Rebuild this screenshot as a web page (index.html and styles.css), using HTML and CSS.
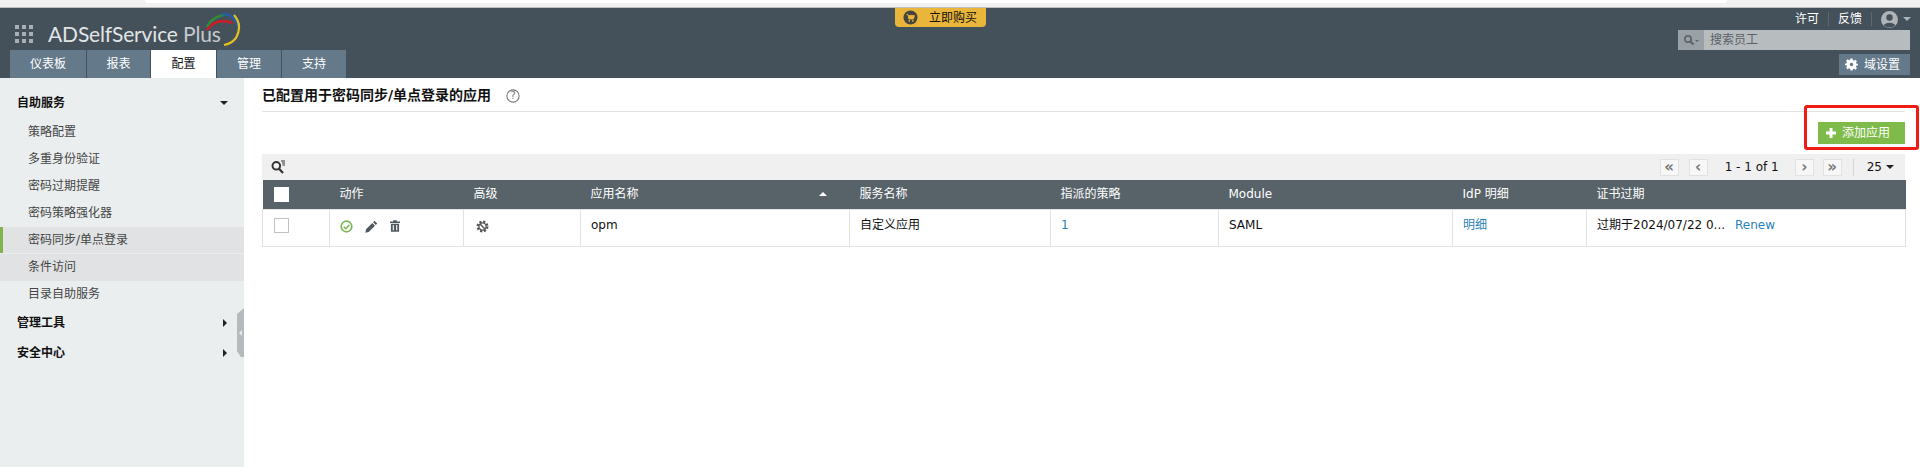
FILE: index.html
```html
<!DOCTYPE html>
<html lang="zh">
<head>
<meta charset="utf-8">
<title>ADSelfService Plus</title>
<link rel="stylesheet" href="styles.css">
</head>
<body>
<div class="chrome"><div class="chrome-field"></div></div>
<header class="header">
  <div class="header-left">
    <div class="brand">
      <svg class="grid-icon" width="19" height="19" viewBox="0 0 19 19" fill="#a9b0b5"><rect x="0" y="0" width="4" height="4"/><rect x="7" y="0" width="4" height="4"/><rect x="14" y="0" width="4" height="4"/><rect x="0" y="7" width="4" height="4"/><rect x="7" y="7" width="4" height="4"/><rect x="14" y="7" width="4" height="4"/><rect x="0" y="14" width="4" height="4"/><rect x="7" y="14" width="4" height="4"/><rect x="14" y="14" width="4" height="4"/></svg>
      <span class="brand-name">ADSelfService <span class="brand-plus">Plus</span></span>
      <svg class="brand-arc" width="44" height="38" viewBox="0 0 44 38" fill="none"><path d="M7 17Q12 6 28 4" stroke="#2e8a3e" stroke-width="2.4"/><path d="M22 4Q34 3 38 17" stroke="#2a5aa5" stroke-width="2.6"/><path d="M7 20Q16 7 33 13" stroke="#c4202a" stroke-width="2.6"/><path d="M34 5Q43 15 36 28Q31 34 24 35" stroke="#e4c21e" stroke-width="2.200"/></svg>
    </div>
    <nav class="tabs">
      <a class="tab t1">仪表板</a><a class="tab t2">报表</a><a class="tab active t3">配置</a><a class="tab t4">管理</a><a class="tab t5">支持</a>
    </nav>
  </div>
  <div class="header-right">
    <div class="top-links">
      <span>许可</span><i class="sep"></i><span>反馈</span><i class="sep"></i>
      <svg width="17" height="17" viewBox="0 0 17 17"><circle cx="8.5" cy="8.5" r="8.5" fill="#aeb4b8"/><circle cx="8.5" cy="6.5" r="3.2" fill="#44505a"/><path d="M2.8 14.2C4 10.8 13 10.8 14.2 14.2A8 8 0 0 1 2.8 14.2Z" fill="#44505a"/></svg>
      <i class="caret-down light"></i>
    </div>
    <div class="search">
      <span class="search-icon"><svg width="16" height="12" viewBox="0 0 16 12" fill="none" stroke="#5d666c"><circle cx="5" cy="5" r="3.2" stroke-width="1.8"/><path d="M7.5 7.5L10.5 10.5" stroke-width="2.2"/><path d="M12 6h4l-2 2z" fill="#5d666c" stroke="none"/></svg></span>
      <span class="search-text">搜索员工</span>
    </div>
    <a class="domain-btn">
      <svg width="13" height="13" viewBox="-1 -1 26 26" fill="#fff"><path d="M10 0h4l.8 3.4 2.2.9 3-1.8 2.8 2.8-1.8 3 .9 2.2L25 10.300v3.400l-3.100.8-.9 2.200 1.800 3-2.800 2.800-3-1.800-2.200.9L14 24h-4l-.8-3.400-2.200-.9-3 1.800-2.800-2.800 1.800-3-.9-2.200L-1 13.700v-3.400l3.100-.8.9-2.200-1.800-3 2.800-2.800 3 1.800 2.200-.9zM12 8.500a3.500 3.500 0 1 0 0 7 3.500 3.500 0 0 0 0-7z" fill-rule="evenodd"/></svg>
      <span>域设置</span>
    </a>
  </div>
  <a class="buy"><svg width="15" height="15" viewBox="0 0 15 15"><circle cx="7.500" cy="7.500" r="7" fill="#46443c"/><path d="M3.500 4.500h1.500l.8 4.500h4.700l.9-3.500H5.300" fill="#e9b63b" stroke="#e9b63b" stroke-width=".8"/><circle cx="6.300" cy="10.800" r=".9" fill="#e9b63b"/><circle cx="9.800" cy="10.800" r=".9" fill="#e9b63b"/></svg><span>立即购买</span></a>
</header>
<div class="body">
  <aside class="sidebar">
    <div class="group first"><span>自助服务</span><i class="caret-down"></i></div>
    <a class="item">策略配置</a>
    <a class="item">多重身份验证</a>
    <a class="item">密码过期提醒</a>
    <a class="item">密码策略强化器</a>
    <a class="item current">密码同步/单点登录</a>
    <a class="item hover">条件访问</a>
    <a class="item">目录自助服务</a>
    <div class="group"><span>管理工具</span><i class="caret-right"></i></div>
    <div class="group"><span>安全中心</span><i class="caret-right"></i></div>
    <div class="collapse"><i class="caret-left"></i></div>
  </aside>
  <main class="main">
    <div class="title-row">
      <h1>已配置用于密码同步/单点登录的应用</h1>
      <svg class="help" width="14" height="14" viewBox="0 0 13 13"><circle cx="6.500" cy="6.500" r="5.700" fill="none" stroke="#777" stroke-width="1"/><text x="6.500" y="9.700" class="help-q">?</text></svg>
    </div>
    <div class="action-row">
      <a class="add-btn"><svg width="10" height="10" viewBox="0 0 10 10" fill="#fff"><path d="M3.500 0h3v3.500H10v3H6.500V10h-3V6.500H0v-3h3.500z"/></svg><span>添加应用</span></a>
      <div class="callout"></div>
    </div>
    <div class="toolbar">
      <svg width="14" height="14" viewBox="0 0 14 14" fill="none" stroke="#333"><circle cx="5.300" cy="5.800" r="3.800" stroke-width="2"/><path d="M8.300 9L12 13" stroke-width="2.200"/><path d="M10 1h4M11 3h3M11.500 5H14" stroke-width="1"/></svg>
      <div class="pager">
        <span class="pg-btn">«</span><span class="pg-btn pg-gap">‹</span>
        <span class="pg-text">1 - 1 of 1</span>
        <span class="pg-btn">›</span><span class="pg-btn">»</span>
        <i class="pg-sep"></i>
        <span class="pg-size">25</span><i class="caret-down dark"></i>
      </div>
    </div>
    <table class="grid">
      <colgroup><col class="c1"><col class="c2"><col class="c3"><col class="c4"><col class="c5"><col class="c6"><col class="c7"><col class="c8"><col class="c9"></colgroup>
      <thead>
        <tr>
          <th class="cell-check"><span class="check head-check"></span></th><th>动作</th><th>高级</th>
          <th><div class="sort-head"><span>应用名称</span><i class="caret-up"></i></div></th>
          <th>服务名称</th><th>指派的策略</th><th>Module</th><th>IdP 明细</th><th>证书过期</th>
        </tr>
      </thead>
      <tbody>
        <tr>
          <td class="cell-check"><span class="check"></span></td>
          <td><div class="actions">
            <svg width="13" height="13" viewBox="0 0 13 13" fill="none" stroke="#7cb85a"><circle cx="6.500" cy="6.500" r="5.300" stroke-width="1.700"/><path d="M3.800 6.700l2 2 3.500-3.800" stroke-width="1.600"/></svg>
            <svg width="13" height="13" viewBox="0 0 13 13" fill="#4f5a60"><path d="M9.500.8l2.700 2.700-1.400 1.400L8.100 2.200zM7.300 3l2.700 2.700-6.300 6.300-3.300.7.600-3.400z"/></svg>
            <svg width="10" height="12" viewBox="0 0 11 13" fill="#4f5a60"><path d="M0 1.500h3.500V.3h4v1.200H11v1.700H0zM1 4h9v8.700H1zM3 5.500v5.700h1.200V5.500zM6.800 5.500v5.700H8V5.500z" fill-rule="evenodd"/></svg>
          </div></td>
          <td><svg class="adv-icon" width="13" height="13" viewBox="0 0 13 13"><circle cx="6.500" cy="6.500" r="4.900" fill="none" stroke="#555" stroke-width="2.200" stroke-dasharray="2.200 1.650"/><circle cx="6.500" cy="6.500" r="3.600" fill="none" stroke="#555" stroke-width="1.300"/><path d="M4 4l5 5" stroke="#555" stroke-width="1.400"/></svg></td>
          <td>opm</td>
          <td>自定义应用</td>
          <td><a class="link">1</a></td>
          <td>SAML</td>
          <td><a class="link">明细</a></td>
          <td><span>过期于2024/07/22 0...</span><a class="link renew">Renew</a></td>
        </tr>
      </tbody>
    </table>
  </main>
</div>
</body>
</html>
```
FILE: styles.css
```css
* { box-sizing: border-box; }
html, body { margin: 0; height: 467px; overflow: hidden; }
body { font-family: "DejaVu Sans", "Noto Sans CJK SC", sans-serif; font-size: 12px; line-height: 16px; color: #111; background: #fff; }
a { text-decoration: none; }
i { display: block; }

.chrome { height: 8px; background: #f1f1f1; border-bottom: 1px solid #bdbfc1; padding-left: 145px; }
.chrome-field { width: 1582px; height: 3px; background: #fff; border-radius: 0 0 4px 4px; }

.header { position: relative; height: 70px; background: #44505a; display: flex; justify-content: space-between; }
.header-left { display: flex; flex-direction: column; justify-content: flex-end; padding-left: 10px; }
.brand { position: relative; display: flex; align-items: center; height: 30px; padding: 0 0 2px 5px; }
.grid-icon { display: block; margin-right: 14px; }
.brand-name { font-family: "Lato", "Open Sans", sans-serif; font-size: 21px; letter-spacing: -.15px; color: #e2e5e6; white-space: nowrap; }
.brand-plus { color: #c4cacd; }
.brand-arc { position: absolute; left: 190px; top: -10px; }
.tabs { display: flex; gap: 1px; height: 28px; }
.tab { width: 76px; display: flex; align-items: center; justify-content: center; background: #64798a; color: #fff; font-size: 12px; }
.t2 { width: 63px; }
.t3 { width: 65px; }
.t4 { width: 64px; }
.t5 { width: 64px; }
.tab.active { background: #fff; color: #111; }

.header-right { display: flex; flex-direction: column; align-items: flex-end; padding-right: 10px; }
.top-links { display: flex; align-items: center; gap: 9px; height: 22px; color: #fff; margin-right: -1px; }
.sep { width: 1px; height: 14px; background: #5d6870; }
.search { display: flex; width: 232px; height: 20px; background: #b7bcbf; }
.search-icon { width: 26px; background: #9aa1a6; display: flex; align-items: center; justify-content: center; }
.search-text { padding-left: 6px; color: #5a6065; line-height: 20px; }
.domain-btn { display: flex; align-items: center; gap: 6px; width: 71px; height: 21px; margin-top: 4px; padding-left: 6px; background: #64798a; color: #fff; }

.buy { position: absolute; left: 895px; top: 0; width: 91px; height: 19px; padding-left: 8px; display: flex; align-items: center; gap: 11px; background: #e9b63b; color: #111; border-radius: 0 0 4px 4px; }

.caret-down { width: 0; height: 0; border-left: 4px solid transparent; border-right: 4px solid transparent; border-top: 4px solid #222; }
.caret-down.light { border-top-color: #aeb4b8; margin-left: -4px; }
.caret-down.dark { margin-left: 4px; }
.caret-right { width: 0; height: 0; margin-right: 1px; border-top: 4px solid transparent; border-bottom: 4px solid transparent; border-left: 4px solid #222; }
.caret-up { width: 0; height: 0; border-left: 4px solid transparent; border-right: 4px solid transparent; border-bottom: 4px solid #fff; }
.caret-left { width: 0; height: 0; border-top: 3px solid transparent; border-bottom: 3px solid transparent; border-right: 3px solid #e8eaeb; }

.body { display: flex; height: 389px; }
.sidebar { position: relative; width: 244px; flex: none; background: #ebeeef; padding-top: 9px; }
.group { height: 30px; padding: 0 16px 0 17px; display: flex; align-items: center; justify-content: space-between; font-weight: 700; color: #111; }
.group.first { height: 32px; }
.item { display: block; height: 27px; line-height: 27px; padding-left: 28px; color: #444; }
.item.current { background: #e1e2e3; border-left: 3px solid #7fb54f; padding-left: 25px; height: 26px; margin-bottom: 1px; }
.item.hover { background: #e1e2e3; }
.collapse { position: absolute; right: 0; top: 230px; width: 7px; height: 49px; display: flex; align-items: center; justify-content: center; background: #b5babc; clip-path: polygon(100% 0, 100% 100%, 55% 100%, 0 88%, 0 12%); }

.main { flex: 1; padding: 0 15px 0 18px; min-width: 0; }
.title-row { display: flex; align-items: center; gap: 15px; height: 34px; border-bottom: 1px solid #e2e2e2; }
h1 { margin: 0; font-size: 14px; font-weight: 700; color: #111; }
.help { margin-top: 3px; }
.help-q { font-family: "DejaVu Sans", sans-serif; font-size: 9px; text-anchor: middle; fill: #777; }
.action-row { position: relative; display: flex; justify-content: flex-end; height: 42px; padding-top: 10px; }
.add-btn { width: 87px; height: 22px; display: flex; align-items: center; gap: 6px; padding-left: 8px; background: #7fbb4a; color: #fff; }
.callout { position: absolute; right: -14px; top: -7px; width: 115px; height: 45px; border: 3px solid #f01b14; border-radius: 3px; }
.toolbar { display: flex; align-items: center; justify-content: space-between; height: 26px; padding-left: 9px; background: #f0f0f0; }
.pager { display: flex; align-items: center; padding-right: 11px; }
.pg-btn { width: 19px; height: 17px; margin-left: 9px; display: flex; align-items: center; justify-content: center; background: #f7f7f7; border: 1px solid #e2e2e2; color: #777; font-weight: 700; font-size: 15px; line-height: 1; }
.pg-gap { margin-left: 10px; }
.pg-text { margin: 0 7px 0 17px; white-space: nowrap; }
.pg-sep { width: 1px; height: 17px; background: #d5d5d5; margin: 0 13px 0 11px; }

.grid { width: 1643px; border-collapse: collapse; table-layout: fixed; }
.c1 { width: 67px; } .c2 { width: 134px; } .c3 { width: 117px; } .c4 { width: 269px; }
.c5 { width: 201px; } .c6 { width: 168px; } .c7 { width: 234px; } .c8 { width: 134px; } .c9 { width: 319px; }
.grid th { height: 29px; background: #586369; color: #fff; font-weight: 400; text-align: left; padding: 0 0 0 10px; white-space: nowrap; }
.grid td { height: 37px; vertical-align: top; padding: 7px 0 0 10px; border: 1px solid #e2e2e2; white-space: nowrap; }
.grid th.cell-check { padding-left: 11px; }
.grid td.cell-check { padding: 8px 0 0 11px; }
.check { display: block; width: 15px; height: 15px; background: #fff; border: 1px solid #bfc3c5; }
.head-check { border: 0; }
.sort-head { display: flex; align-items: center; justify-content: space-between; padding-right: 23px; }
.actions { display: flex; align-items: center; gap: 12px; padding-top: 3px; }
.actions svg, .adv-icon { display: block; }
.adv-icon { margin: 3px 0 0 2px; }
.link { color: #2b7fb8; }
.renew { margin-left: 10px; }
```
